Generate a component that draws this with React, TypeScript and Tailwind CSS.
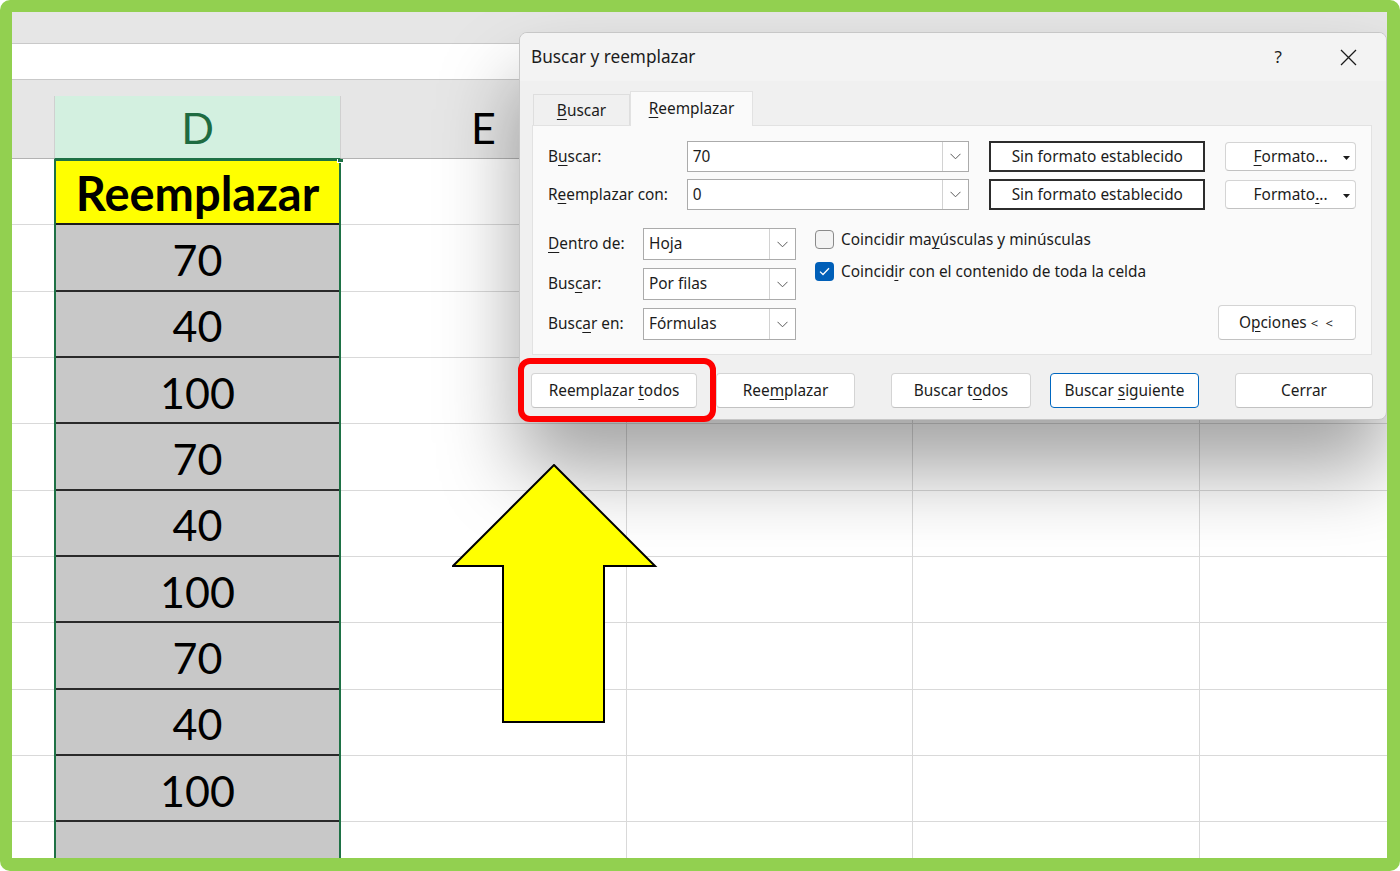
import React from 'react';

const nums = ['70', '40', '100', '70', '40', '100', '70', '40', '100', ''];
const rowsN = Array.from({ length: 11 }, (_, i) => i);

function U({ children }: { children: React.ReactNode }) {
  return <u className="underline underline-offset-[3px] decoration-1">{children}</u>;
}

function Chevron() {
  return (
    <svg width="11" height="7" viewBox="0 0 11 7">
      <path d="M0.5 0.8 L5.5 5.8 L10.5 0.8" fill="none" stroke="#5a5a5a" strokeWidth="1" />
    </svg>
  );
}

function Combo({ value, className }: { value: string; className: string }) {
  return (
    <div className={`flex bg-white border border-[#ababab] ${className}`}>
      <div className="flex-1 flex items-center pl-[5px]">{value}</div>
      <div className="w-[26px] border-l border-[#d2d2d2] flex items-center justify-center">
        <Chevron />
      </div>
    </div>
  );
}

function Btn({ children, className }: { children: React.ReactNode; className: string }) {
  return (
    <div className={`relative flex items-center justify-center bg-white rounded-[4px] ${className}`}>
      {children}
    </div>
  );
}

function CheckBox({ checked }: { checked: boolean }) {
  if (checked) {
    return (
      <div className="w-[19px] h-[19px] rounded-[4px] bg-[#005fb8] flex items-center justify-center">
        <svg width="11" height="9" viewBox="0 0 11 9">
          <path d="M1 4.6 L4 7.5 L10 1.2" fill="none" stroke="#ffffff" strokeWidth="1.3" />
        </svg>
      </div>
    );
  }
  return <div className="w-[19px] h-[19px] rounded-[4px] bg-[#f3f3f3] border border-[#8a8a8a]" />;
}

function Dialog() {
  return (
    <div className="absolute left-[507px] top-[20px] w-[868px] h-[388px] rounded-[8px] border border-[#c7c7c7] bg-[#f0f0f0] shadow-[0_50px_80px_rgba(0,0,0,0.36)] font-['Noto_Sans',sans-serif] text-[15.4px] text-[#1b1b1b] overflow-hidden">
      {/* title bar */}
      <div className="h-[48px] bg-[#f3f3f3] flex items-center pl-[11px] pr-[29px]">
        <span className="text-[17.2px]">Buscar y reemplazar</span>
        <span className="ml-auto text-[17px]">?</span>
        <span className="ml-[58px] flex">
          <svg width="17" height="17" viewBox="0 0 17 17">
            <path d="M1 1 L16 16 M16 1 L1 16" stroke="#1b1b1b" strokeWidth="1.3" />
          </svg>
        </span>
      </div>

      <div className="px-[12px] pt-[10px]">
        {/* tabs */}
        <div className="flex items-end h-[34px] pl-[1px]">
          <div className="w-[97px] h-[31px] border border-b-0 border-[#dedede] flex items-center justify-center pt-[2px]">
            <span>
              <U>B</U>uscar
            </span>
          </div>
          <div className="w-[123px] h-[35px] -mb-px relative z-10 bg-[#fafafa] border border-b-0 border-[#e2e2e2] flex items-center justify-center">
            <span>
              <U>R</U>eemplazar
            </span>
          </div>
        </div>

        {/* panel */}
        <div className="w-[840px] h-[230px] bg-[#fafafa] border border-[#e2e2e2] pl-[15px] pr-[15px] pt-[15px]">
          <div className="flex items-center h-[31px]">
            <div className="w-[139px]">
              B<U>u</U>scar:
            </div>
            <Combo value="70" className="w-[283px] h-[31px]" />
            <div className="ml-[20px] w-[216px] h-[31px] bg-white border-2 border-[#2c2c2c] flex items-center justify-center">
              Sin formato establecido
            </div>
            <Btn className="ml-[20px] w-[131px] h-[29px] border border-[#d4d4d4] border-b-[#c2c2c2]">
              <span>
                <U>F</U>ormato...
              </span>
              <svg className="absolute right-[5px] top-[13px]" width="7" height="4" viewBox="0 0 7 4">
                <path d="M0 0 L7 0 L3.5 4 Z" fill="#1b1b1b" />
              </svg>
            </Btn>
          </div>
          <div className="flex items-center h-[31px] mt-[7px]">
            <div className="w-[139px]">
              R<U>e</U>emplazar con:
            </div>
            <Combo value="0" className="w-[283px] h-[31px]" />
            <div className="ml-[20px] w-[216px] h-[31px] bg-white border-2 border-[#2c2c2c] flex items-center justify-center">
              Sin formato establecido
            </div>
            <Btn className="ml-[20px] w-[131px] h-[29px] border border-[#d4d4d4] border-b-[#c2c2c2]">
              <span>
                Formato<U>.</U>..
              </span>
              <svg className="absolute right-[5px] top-[13px]" width="7" height="4" viewBox="0 0 7 4">
                <path d="M0 0 L7 0 L3.5 4 Z" fill="#1b1b1b" />
              </svg>
            </Btn>
          </div>

          <div className="flex mt-[18px] h-[112px]">
            <div className="flex flex-col gap-[8px]">
              <div className="flex items-center h-[32px]">
                <div className="w-[95px]">
                  <U>D</U>entro de:
                </div>
                <Combo value="Hoja" className="w-[153px] h-[32px]" />
              </div>
              <div className="flex items-center h-[32px]">
                <div className="w-[95px]">
                  Bus<U>c</U>ar:
                </div>
                <Combo value="Por filas" className="w-[153px] h-[32px]" />
              </div>
              <div className="flex items-center h-[32px]">
                <div className="w-[95px]">
                  Busc<U>a</U>r en:
                </div>
                <Combo value="Fórmulas" className="w-[153px] h-[32px]" />
              </div>
            </div>
            <div className="ml-[19px] pt-[2px] flex flex-col gap-[13px]">
              <div className="flex items-center gap-[7px] h-[19px]">
                <CheckBox checked={false} />
                <span>
                  Coincidir ma<U>y</U>úsculas y minúsculas
                </span>
              </div>
              <div className="flex items-center gap-[7px] h-[19px]">
                <CheckBox checked={true} />
                <span>
                  Coincid<U>i</U>r con el contenido de toda la celda
                </span>
              </div>
            </div>
            <Btn className="ml-auto self-end w-[138px] h-[35px] border border-[#d4d4d4] border-b-[#c2c2c2]">
              <span>
                O<U>p</U>ciones <span className="text-[13px] tracking-[2px]">&lt; &lt;</span>
              </span>
            </Btn>
          </div>
        </div>
      </div>

      {/* bottom buttons */}
      <div className="flex pl-[11px] mt-[18px]">
        <Btn className="w-[166px] h-[35px] border border-[#d4d4d4] border-b-[#c2c2c2]">
          <span>
            Reemplazar <U>t</U>odos
          </span>
        </Btn>
        <Btn className="ml-[19px] w-[139px] h-[35px] border border-[#d4d4d4] border-b-[#c2c2c2]">
          <span>
            Ree<U>m</U>plazar
          </span>
        </Btn>
        <Btn className="ml-[36px] w-[140px] h-[35px] border border-[#d4d4d4] border-b-[#c2c2c2]">
          <span>
            Buscar t<U>o</U>dos
          </span>
        </Btn>
        <Btn className="ml-[19px] w-[149px] h-[35px] border-[1.5px] border-[#0067c0]">
          <span>
            Buscar <U>s</U>iguiente
          </span>
        </Btn>
        <Btn className="ml-[36px] w-[138px] h-[35px] border border-[#d4d4d4] border-b-[#c2c2c2]">
          <span>Cerrar</span>
        </Btn>
      </div>
    </div>
  );
}

function WhiteCol({ className }: { className: string }) {
  return (
    <div className={`flex flex-col ${className}`}>
      {rowsN.map((i) => (
        <div key={i} className="h-[66.33px] shrink-0 border-b border-r border-[#d9d9d9]" />
      ))}
    </div>
  );
}

export default function App() {
  return (
    <div className="w-[1400px] h-[871px] bg-white">
      <div className="relative h-full w-full overflow-hidden rounded-[10px] border-[#92d050] border-t-[12px] border-l-[12px] border-r-[13px] border-b-[13px] bg-white font-[Lato,sans-serif]">
        {/* top band */}
        <div className="h-[32px] bg-[#e6e6e6] border-b border-[#c9c9c9]" />
        {/* formula bar */}
        <div className="h-[36px] bg-white border-b border-[#c9c9c9]" />
        {/* column headers */}
        <div className="h-[79px] bg-[#e6e6e6] pt-[16px] flex">
          <div className="w-[42px] h-[63px] border-b border-[#b3b3b3]" />
          <div className="w-[287px] h-[63px] bg-[#d3f0e0] border-l border-r border-[#d0d0d0] border-b border-b-[#1e7145] flex items-center justify-center text-[43px] text-[#1e6b41] leading-none">
            D
          </div>
          <div className="w-[286px] h-[63px] border-r border-[#d0d0d0] border-b border-b-[#b3b3b3] flex items-center justify-center text-[43px] text-black leading-none">
            E
          </div>
          <div className="flex-1 h-[63px] border-b border-[#b3b3b3]" />
        </div>

        {/* grid body */}
        <div className="flex h-[699px] overflow-hidden">
          <div className="w-[42px] flex flex-col">
            {rowsN.map((i) => (
              <div key={i} className="h-[66.33px] shrink-0 border-b border-[#d9d9d9]" />
            ))}
          </div>
          <div className="relative w-[287px] border-l-2 border-r-2 border-t-2 border-[#1e7145] flex flex-col">
            <div className="absolute -top-[5px] -right-[5px] w-[7px] h-[7px] bg-[#1e7145] border border-white" />
            <div className="h-[64.33px] shrink-0 bg-[#ffff00] border-b-2 border-[#1c1c1c] flex items-center justify-center pt-[2px] text-[47px] font-bold text-black leading-none">
              Reemplazar
            </div>
            {nums.map((n, i) => (
              <div
                key={i}
                className="h-[66.33px] shrink-0 bg-[#c8c8c8] border-b-2 border-[#2a2a2a] flex items-center justify-center pt-[4px] text-[43px] text-black leading-none"
              >
                {n}
              </div>
            ))}
          </div>
          <WhiteCol className="w-[286px]" />
          <WhiteCol className="w-[286px]" />
          <WhiteCol className="w-[287px]" />
          <div className="flex-1 flex flex-col">
            {rowsN.map((i) => (
              <div key={i} className="h-[66.33px] shrink-0 border-b border-[#d9d9d9]" />
            ))}
          </div>
        </div>

        <Dialog />

        {/* red highlight */}
        <div className="absolute left-[506px] top-[346px] w-[198px] h-[64px] border-[6px] border-[#ff0000] rounded-[12px]" />

        {/* yellow arrow */}
        <svg className="absolute left-[440px] top-[452px]" width="206" height="260" viewBox="0 0 206 260">
          <path
            d="M102 1 L203 102 L152 102 L152 258 L51 258 L51 102 L1 102 Z"
            fill="#ffff00"
            stroke="#000000"
            strokeWidth="2"
            strokeLinejoin="miter"
          />
        </svg>
      </div>
    </div>
  );
}
